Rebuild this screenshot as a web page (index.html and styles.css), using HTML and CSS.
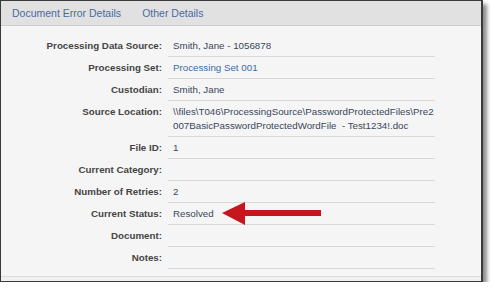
FILE: index.html
```html
<!DOCTYPE html>
<html lang="en">
<head>
    <meta charset="UTF-8" />
    <title>Document Error Details</title>
    <link rel="stylesheet" href="styles.css">
</head>
<body>
    <div class="frame">
        <div class="tabs">
            <a href="#">Document Error Details</a>
            <a href="#">Other Details</a>
        </div>

        <div class="content">
            <div class="details">
                <div class="label">Processing Data Source:</div>
                <div class="value">Smith, Jane - 1056878</div>

                <div class="label">Processing Set:</div>
                <div class="value"><a href="#">Processing Set 001</a></div>

                <div class="label">Custodian:</div>
                <div class="value">Smith, Jane</div>

                <div class="label">Source Location:</div>
                <div class="value">\\files\T046\ProcessingSource\PasswordProtectedFiles\Pre2007BasicPasswordProtectedWordFile&nbsp; - Test1234!.doc</div>

                <div class="label">File ID:</div>
                <div class="value">1</div>

                <div class="label">Current Category:</div>
                <div class="value"></div>

                <div class="label">Number of Retries:</div>
                <div class="value">2</div>

                <div class="label">Current Status:</div>
                <div class="value status">Resolved
                    <svg class="arrow" width="100" height="24" viewBox="0 0 100 24">
                        <polygon points="0,11 23,0 23,8 99,8 99,14 23,14 23,23" fill="#c4161c" />
                    </svg>
                </div>

                <div class="label">Document:</div>
                <div class="value"></div>

                <div class="label">Notes:</div>
                <div class="value"></div>
            </div>
        </div>

        <div class="foot"></div>
    </div>
</body>
</html>
```

FILE: styles.css
```css
body {
    margin: 0;
    background: #fff;
    font-family: 'Liberation Sans', Arial, sans-serif;
}
.frame {
    width: 480px;
    height: 280px;
    border: 1px solid #3a3a3a;
    border-right-width: 2px;
    background: #f5f5f5;
    box-shadow: 4px 4px 4px rgba(0, 0, 0, 0.45);
    display: flex;
    flex-direction: column;
}
.tabs {
    flex-shrink: 0;
    height: 24px;
    background: #e1e1e1;
    border-bottom: 1px solid #cdcdcd;
    display: flex;
    align-items: center;
    padding-left: 11px;
    gap: 21px;
}
.tabs a {
    font-size: 10.5px;
    color: #4a6a9e;
    text-decoration: none;
}
.content {
    flex: 1;
    padding-top: 9px;
}
.details {
    display: grid;
    grid-template-columns: 161px 267px;
    column-gap: 6px;
    font-size: 9.75px;
    line-height: 14px;
}
.label {
    text-align: right;
    font-weight: bold;
    color: #444;
    padding-top: 4px;
}
.value {
    color: #38475a;
    padding: 4px 0 3px 5px;
    min-height: 14px;
    border-bottom: 1px solid #d8d8d8;
    word-break: break-all;
}
.value a {
    color: #3b6ca6;
    text-decoration: none;
}
.status {
    position: relative;
}
.arrow {
    position: absolute;
    left: 54px;
    top: -1px;
}
.foot {
    flex-shrink: 0;
    height: 4px;
    border-top: 1px solid #dcdcdc;
    background: #f0f0f0;
}
```
